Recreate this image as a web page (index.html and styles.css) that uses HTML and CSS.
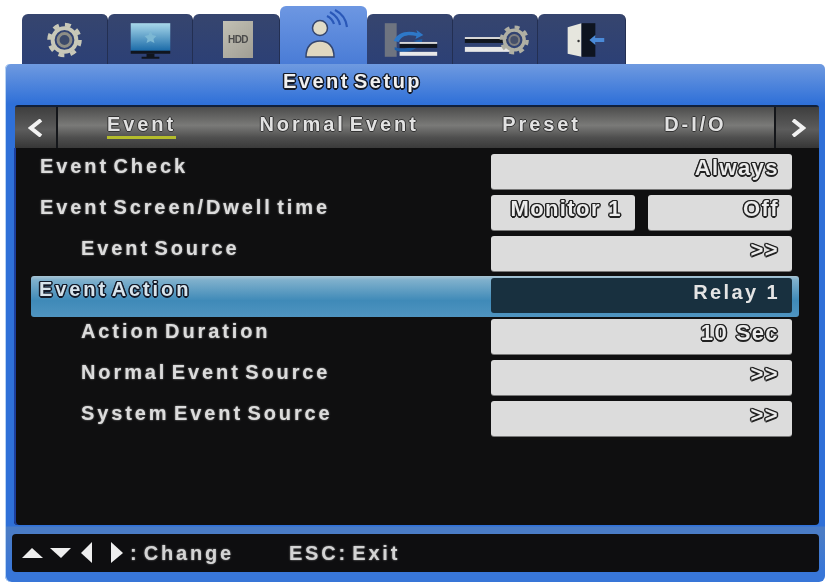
FILE: index.html
```html
<!DOCTYPE html>
<html lang="en">
<head>
  <meta charset="UTF-8">
  <title>Event Setup</title>
  <link rel="stylesheet" href="styles.css">
</head>
<body>
  <div class="tabs">
    <div class="tab tab-a">
      <svg class="icon" viewBox="0 0 86 50">
        <circle cx="43" cy="26" r="15.5" fill="none" stroke="#c8c8b8" stroke-width="4" stroke-dasharray="6 6.17"/>
        <circle cx="43" cy="26" r="12" fill="none" stroke="#c8c8b8" stroke-width="4"/>
        <circle cx="43" cy="26" r="6.5" fill="#3c4a6a" stroke="#8e8e86" stroke-width="3"/>
      </svg>
    </div>
    <div class="tab tab-b">
      <svg class="icon" viewBox="0 0 85 50">
        <defs>
          <linearGradient id="scr" x1="0" y1="0" x2="0" y2="1">
            <stop offset="0" stop-color="#a8d8ea"/>
            <stop offset="1" stop-color="#1a6aa8"/>
          </linearGradient>
        </defs>
        <rect x="23" y="9" width="40" height="28" fill="url(#scr)"/>
        <path d="M23 37h40v3H23z" fill="#10151e"/>
        <path d="M39 40h8v3h5v2H34v-2h5z" fill="#10151e"/>
        <path d="M43 17l2 4 4 1-3 3 1 4-4-2-4 2 1-4-3-3 4-1z" fill="#7cb8d4"/>
      </svg>
    </div>
    <div class="tab tab-c">
      <div class="hdd">HDD</div>
    </div>
    <div class="tab tab-d active">
      <svg class="icon" viewBox="0 0 87 58">
        <circle cx="40" cy="22" r="7.5" fill="#e0dcc8" stroke="#33456e" stroke-width="1.5"/>
        <path d="M26 51c0-11 6-16 14-16s14 5 14 16z" fill="#e0d8c0" stroke="#33456e" stroke-width="1.5"/>
        <path d="M47 10c4 2 6 5 7 8M50 6c5 3 9 7 10 13M55 4c6 3 11 9 12 17" fill="none" stroke="#2a58b8" stroke-width="2.2"/>
      </svg>
    </div>
    <div class="tab tab-e">
      <svg class="icon" viewBox="0 0 86 50">
        <rect x="18" y="9" width="12" height="34" fill="#6e7480"/>
        <path d="M27 27c4-9 14-11 24-8l-1-3 7 5-8 4 1-3c-8-2-15-1-18 6z" fill="#2e78c8"/>
        <path d="M28 33c7 3 17 2 22-5l-3-1 9-2-1 8-2-2c-6 7-17 9-25 5z" fill="#1e5ea8"/>
        <rect x="33" y="28" width="38" height="2" fill="#d8d8d8"/>
        <rect x="33" y="30" width="38" height="4" fill="#10151e"/>
        <rect x="33" y="38" width="38" height="4" fill="#e8e8e8"/>
      </svg>
    </div>
    <div class="tab tab-f">
      <svg class="icon" viewBox="0 0 85 50">
        <rect x="12" y="23" width="42" height="2" fill="#d8d8d8"/>
        <rect x="12" y="25" width="42" height="4" fill="#10151e"/>
        <rect x="12" y="33" width="46" height="5" fill="#e8e8e8"/>
        <circle cx="62" cy="26" r="13" fill="none" stroke="#b0b0a4" stroke-width="3.5" stroke-dasharray="5 5.2"/>
        <circle cx="62" cy="26" r="10" fill="none" stroke="#b0b0a4" stroke-width="3.5"/>
        <circle cx="62" cy="26" r="5" fill="#46506a" stroke="#808080" stroke-width="2"/>
      </svg>
    </div>
    <div class="tab tab-g">
      <svg class="icon" viewBox="0 0 88 50">
        <path d="M30 13l14-4v34l-14-3z" fill="#e6e6de"/>
        <rect x="44" y="9" width="14" height="34" fill="#0e1420"/>
        <circle cx="41" cy="27" r="1.2" fill="#333"/>
        <path d="M52 26l6-5v3h9v4h-9v3z" fill="#4a8ad8"/>
      </svg>
    </div>
  </div>

  <div class="panel">
    <div class="title"><span class="outlined">Event Setup</span></div>

    <div class="subnav">
      <div class="nav-btn">
        <svg width="16" height="18" viewBox="0 0 16 18"><path d="M13 1L3 9l10 8" fill="none" stroke="#f2f2f2" stroke-width="4"/></svg>
      </div>
      <div class="nav-items">
        <span class="nav-item current">Event</span>
        <span class="nav-item">Normal Event</span>
        <span class="nav-item">Preset</span>
        <span class="nav-item">D-I/O</span>
      </div>
      <div class="nav-btn nav-next">
        <svg width="16" height="18" viewBox="0 0 16 18"><path d="M3 1l10 8-10 8" fill="none" stroke="#f2f2f2" stroke-width="4"/></svg>
      </div>
    </div>

    <div class="list">
      <div class="row">
        <div class="label">Event Check</div>
        <div class="values"><div class="val">Always</div></div>
      </div>
      <div class="row">
        <div class="label">Event Screen/Dwell time</div>
        <div class="values"><div class="val">Monitor 1</div><div class="val">Off</div></div>
      </div>
      <div class="row sub">
        <div class="label">Event Source</div>
        <div class="values"><div class="val">&gt;&gt;</div></div>
      </div>
      <div class="row selected">
        <div class="label">Event Action</div>
        <div class="values"><div class="val">Relay 1</div></div>
      </div>
      <div class="row sub">
        <div class="label">Action Duration</div>
        <div class="values"><div class="val">10 Sec</div></div>
      </div>
      <div class="row sub">
        <div class="label">Normal Event Source</div>
        <div class="values"><div class="val">&gt;&gt;</div></div>
      </div>
      <div class="row sub">
        <div class="label">System Event Source</div>
        <div class="values"><div class="val">&gt;&gt;</div></div>
      </div>
    </div>

    <div class="footer">
      <svg class="keys" width="102" height="22" viewBox="0 0 102 22">
        <path d="M0 16L10 6l11 10z" fill="#eee"/>
        <path d="M28 6h21L39 16z" fill="#eee"/>
        <path d="M70 0v21L59 11z" fill="#eee"/>
        <path d="M89 0v21l12-10z" fill="#eee"/>
      </svg>
      <span class="hint hint-change">: Change</span>
      <span class="hint">ESC: Exit</span>
    </div>
  </div>
</body>
</html>
```

FILE: styles.css
```css
* { box-sizing: border-box; }
html, body { margin: 0; height: 100%; }
body { width: 828px; height: 584px; overflow: hidden; background: #fff; font-family: "Liberation Sans", Arial, sans-serif; font-weight: bold; color: #ddd; }

.tabs { display: flex; align-items: flex-end; height: 64px; padding-left: 22px; }
.tab { height: 50px; display: flex; align-items: center; justify-content: center; background: linear-gradient(#36456e, #2c4076); border-radius: 6px 6px 0 0; border-right: 1px solid #232f52; filter: blur(0.6px); }
.tab-a { width: 86px; }
.tab-b { width: 85px; }
.tab-c { width: 87px; }
.tab-d { width: 87px; }
.tab-e { width: 86px; }
.tab-f { width: 85px; }
.tab-g { width: 88px; }
.tab.active { height: 58px; background: linear-gradient(#6d97e2, #4a7cd6); border-right: none; }
.icon { width: 100%; height: 100%; display: block; }
.hdd { width: 30px; height: 37px; margin-left: 4px; display: flex; align-items: center; justify-content: center; background: linear-gradient(135deg, #c2c0b4, #a09e94); color: #4a4a4a; font-size: 10px; letter-spacing: -0.5px; }

.panel { margin-left: 5px; width: 820px; height: 518px; padding: 0 6px 0 9px; background: linear-gradient(#6f9ae0 0, #2f70d8 40px, #2f70d8 462px, #4a7cc6 463px, #4a7cc6 470px, #3876d8 508px); border-radius: 5px 5px 6px 6px; box-shadow: inset 1px 0 0 #b8d4f4; display: flex; flex-direction: column; filter: blur(0.6px); }

.title { height: 41px; padding: 6px 0 0 269px; font-size: 20px; letter-spacing: 2.5px; word-spacing: -4px; color: #f0f0f0; }
.outlined, .selected .label { text-shadow: 1.5px 0 0 #141a28, -1.5px 0 0 #141a28, 0 1.5px 0 #141a28, 0 -1.5px 0 #141a28, 1px 1px 0 #141a28, -1px -1px 0 #141a28, 1px -1px 0 #141a28, -1px 1px 0 #141a28; }

.subnav { height: 43px; margin-left: 1px; display: flex; background: linear-gradient(#4c4c4c, #7a7a78 45%, #4e4e4e 75%, #3a3a3a); border-top: 2px solid #10203c; border-radius: 3px 3px 0 0; }
.nav-btn { width: 43px; display: flex; align-items: center; justify-content: center; background: linear-gradient(#3e3e3e, #5c5c5c 55%, #363636); border-right: 2px solid #14161a; }
.nav-next { width: 45px; margin-left: auto; border-right: none; border-left: 2px solid #14161a; }
.nav-items { display: flex; gap: 83.5px; padding: 6px 0 0 49px; }
.nav-item { height: 26px; font-size: 20px; letter-spacing: 2.9px; word-spacing: -4.5px; color: #e2e2e2; white-space: nowrap; text-shadow: 1px 0 0 #333, -1px 0 0 #333, 0 1px 0 #333, 0 -1px 0 #333; }
.nav-item.current { border-bottom: 3px solid #b4bc2c; }

.list { flex: 1; padding-top: 4px; background: #0f0f10; box-shadow: inset 2px 0 0 #1c3e9c; border-radius: 0 0 4px 4px; }
.row { height: 41.2px; display: flex; padding-right: 27px; margin-left: 17px; }
.label { flex: 1; padding: 3px 0 0 9px; font-size: 20px; letter-spacing: 2.9px; word-spacing: -4px; color: #dcdcdc; white-space: nowrap; text-shadow: 0 0 2px #999; }
.sub .label { padding-left: 50px; }
.values { width: 301px; margin-top: 2px; height: 35px; display: flex; gap: 13px; }
.val { flex: 1; padding: 1px 13px 0 0; text-align: right; font-size: 22px; letter-spacing: 1.4px; color: #ececec; background: #dcdcdc; border-radius: 3px; box-shadow: 0 1px 0 #777; text-shadow: 1.5px 0 0 #222, -1.5px 0 0 #222, 0 1.5px 0 #222, 0 -1.5px 0 #222, 1px 1px 0 #222, -1px -1px 0 #222, 1px -1px 0 #222, -1px 1px 0 #222; white-space: nowrap; }

.row.selected { margin-right: 20px; padding-right: 7px; background: linear-gradient(#a8c4d4 0, #7fb0cc 10%, #3f8ab8 60%, #4f94c0 100%); border-radius: 3px; }
.selected .label { padding-left: 8px; padding-top: 2px; color: #d8e4ec; }
.selected .val { background: #18303f; color: #e4e4e4; text-shadow: none; box-shadow: none; font-size: 20px; letter-spacing: 2.4px; padding-top: 3px; padding-right: 12px; }

.footer { height: 38px; margin: 9px 0 10px -2px; width: 807px; display: flex; align-items: center; padding-left: 10px; background: #0e0e10; border-radius: 4px; flex: none; }
.keys { flex: none; }
.hint { font-size: 20px; letter-spacing: 2.8px; word-spacing: -4px; color: #d4d4d4; text-shadow: 0 0 2px #999; white-space: nowrap; }
.hint-change { margin: 0 55px 0 6px; }
```
